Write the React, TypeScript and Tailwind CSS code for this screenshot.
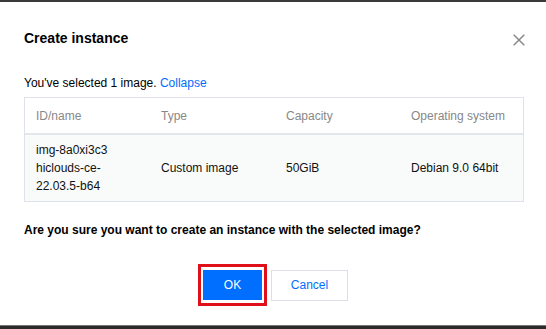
import React from "react";

export default function App() {
  const cols = "grid grid-cols-[125px_125px_125px_1fr]";
  return (
    <div className="w-[546px] h-[329px] flex flex-col bg-white font-['Liberation_Sans',Arial,sans-serif] text-black overflow-hidden">
      <div className="h-[2px] bg-[#3a3a3a] shrink-0" />
      <div className="flex-1 pl-6 pt-[24px]">
        <div className="flex items-center justify-between w-[501px] h-6">
          <h1 className="text-[14px] leading-6 font-bold">Create instance</h1>
          <svg width="12" height="12" viewBox="0 0 12 12" className="mt-[4px]">
            <path d="M0.7 0.7 L11.3 11.3 M11.3 0.7 L0.7 11.3" stroke="#888" strokeWidth="1.5" />
          </svg>
        </div>
        <p className="mt-[24px] text-[12px] leading-[18px]">
          You've selected 1 image. <span className="text-[#006eff]">Collapse</span>
        </p>
        <div className="mt-[5px] w-[500px] border border-[#dfe3e9] text-[12px]">
          <div className={`${cols} h-[37px] items-center pl-[11px] text-[#888] border-b-2 border-[#e3e6eb]`}>
            <div>ID/name</div>
            <div>Type</div>
            <div>Capacity</div>
            <div className="whitespace-nowrap">Operating system</div>
          </div>
          <div className={`${cols} h-[66px] items-center pl-[11px] bg-[#f9fbfb] leading-[18px] text-[#111]`}>
            <div>
              img-8a0xi3c3
              <br />
              hiclouds-ce-
              <br />
              22.03.5-b64
            </div>
            <div>Custom image</div>
            <div>50GiB</div>
            <div className="whitespace-nowrap">Debian 9.0 64bit</div>
          </div>
        </div>
        <p className="mt-[19px] text-[12px] leading-[18px] font-bold">
          Are you sure you want to create an instance with the selected image?
        </p>
        <div className="mt-[25px] flex justify-center items-center gap-[4px] pr-6">
          <div className="border-[3px] border-[#e0101a] px-[2px] py-[3px]">
            <button className="block w-[59px] h-[30px] bg-[#006eff] text-white text-[12px]">OK</button>
          </div>
          <button className="w-[77px] h-[31px] border border-[#dcdfe5] text-[#006eff] text-[12px] bg-white">
            Cancel
          </button>
        </div>
      </div>
      <div className="h-[4px] bg-[#2b2b2b] border-t border-[#777] shrink-0" />
    </div>
  );
}
